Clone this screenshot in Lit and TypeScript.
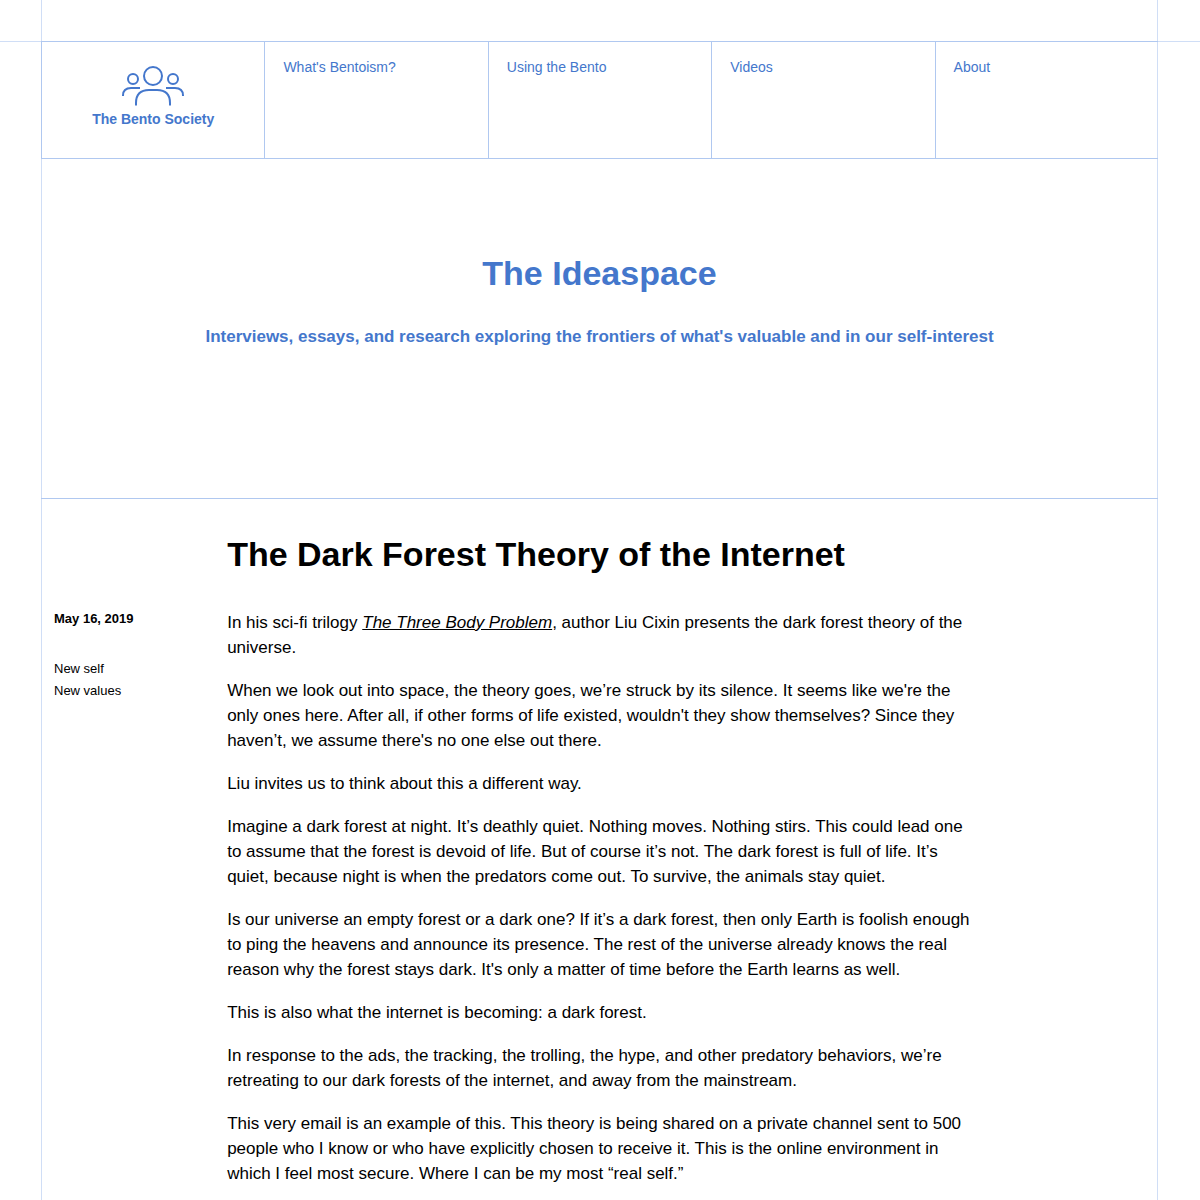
import { LitElement, html, css } from "lit";
import { customElement } from "lit/decorators.js";

const NAV = ["What's Bentoism?", "Using the Bento", "Videos", "About"];
const TOPICS = ["New self", "New values"];

const PARAGRAPHS = [
  "When we look out into space, the theory goes, we’re struck by its silence. It seems like we're the only ones here. After all, if other forms of life existed, wouldn't they show themselves? Since they haven’t, we assume there's no one else out there.",
  "Liu invites us to think about this a different way.",
  "Imagine a dark forest at night. It’s deathly quiet. Nothing moves. Nothing stirs. This could lead one to assume that the forest is devoid of life. But of course it’s not. The dark forest is full of life. It’s quiet, because night is when the predators come out. To survive, the animals stay quiet.",
  "Is our universe an empty forest or a dark one? If it’s a dark forest, then only Earth is foolish enough to ping the heavens and announce its presence. The rest of the universe already knows the real reason why the forest stays dark. It's only a matter of time before the Earth learns as well.",
  "This is also what the internet is becoming: a dark forest.",
  "In response to the ads, the tracking, the trolling, the hype, and other predatory behaviors, we’re retreating to our dark forests of the internet, and away from the mainstream.",
  "This very email is an example of this. This theory is being shared on a private channel sent to 500 people who I know or who have explicitly chosen to receive it. This is the online environment in which I feel most secure. Where I can be my most “real self.”",
];

@customElement("bento-header")
export class BentoHeader extends LitElement {
  static styles = css`
    :host {
      display: block;
    }
    .bar {
      display: grid;
      grid-template-columns: repeat(5, 1fr);
      min-height: 116px;
      margin-top: -1px;
      border: solid #b0c8f0;
      border-width: 1px 0;
    }
    .brand {
      display: flex;
      flex-direction: column;
      align-items: center;
      gap: 3px;
      padding-top: 24px;
      border-left: 1px solid #b0c8f0;
      font-size: 14px;
      line-height: 20px;
      font-weight: 700;
      color: #4477cc;
      text-decoration: none;
    }
    .mark {
      display: block;
      width: 62px;
      height: 40px;
      fill: none;
      stroke: #4477cc;
      stroke-width: 2;
    }
    .nav {
      display: contents;
    }
    .item {
      padding: 15px 18px;
      border-left: 1px solid #b0c8f0;
      font-size: 14px;
      line-height: 20px;
      color: #4477cc;
      text-decoration: none;
    }
  `;

  render() {
    return html`
      <header class="bar">
        <a class="brand" href="#home">
          <svg class="mark" viewBox="0 0 62 40" aria-hidden="true">
            <circle cx="31" cy="10" r="9" />
            <circle cx="11" cy="13" r="5" />
            <circle cx="51" cy="13" r="5" />
            <path d="M14 39.500V37Q14 24 27 24H35Q48 24 48 37V39.500" />
            <path d="M1 30V29.500Q1 22 9 22H18" />
            <path d="M44 22H53Q61 22 61 29.500V30" />
          </svg>
          <span>The Bento Society</span>
        </a>
        <nav class="nav">
          ${NAV.map((label) => html`<a class="item" href="#">${label}</a>`)}
        </nav>
      </header>
    `;
  }
}

@customElement("app-root")
export class AppRoot extends LitElement {
  static styles = css`
    :host {
      display: block;
      min-height: 100vh;
      background: #fff;
      color: #000;
      font-family: "Liberation Sans", Arial, sans-serif;
    }
    .top {
      padding: 0 42px 0 41px;
      border-bottom: 1px solid #d0def6;
    }
    .rails {
      height: 41px;
      box-shadow: inset 1px 0 #d0def6, inset -1px 0 #d0def6;
    }
    .frame {
      margin: 0 42px 0 41px;
      box-shadow: inset 1px 0 #d0def6, inset -1px 0 #d0def6;
    }
    .hero {
      padding: 92px 16px 149px;
      border-bottom: 1px solid #b0c8f0;
      color: #4477cc;
      text-align: center;
    }
    .hero-title,
    .title {
      margin: 0;
      font-size: 34px;
      line-height: 44px;
      font-weight: 700;
    }
    .tagline {
      margin: 29px 0 0;
      font-size: 17px;
      line-height: 25px;
      font-weight: 700;
    }
    .article {
      display: grid;
      grid-template-columns: 1fr 4fr 1fr;
      row-gap: 32px;
      padding-top: 33px;
    }
    .title {
      grid-column: 2;
    }
    .meta {
      grid-column: 1;
      padding-left: 13px;
      font-size: 13px;
      line-height: 22px;
    }
    .date {
      display: block;
      font-weight: 700;
    }
    .topics {
      list-style: none;
      margin: 28px 0 0;
      padding: 0;
    }
    .topic {
      color: inherit;
      text-decoration: none;
    }
    .body {
      grid-column: 2;
      padding-top: 2px;
      font-size: 17px;
      line-height: 25px;
    }
    .para {
      margin: 0 0 18px;
    }
    .book {
      color: inherit;
      font-style: italic;
    }
  `;

  render() {
    return html`
      <div class="top"><div class="rails"></div></div>
      <div class="frame">
        <bento-header></bento-header>
        <section class="hero">
          <h1 class="hero-title">The Ideaspace</h1>
          <p class="tagline">
            Interviews, essays, and research exploring the frontiers of what's valuable and in our self-interest
          </p>
        </section>
        <article class="article">
          <h2 class="title">The Dark Forest Theory of the Internet</h2>
          <aside class="meta">
            <time class="date" datetime="2019-05-16">May 16, 2019</time>
            <ul class="topics">
              ${TOPICS.map((t) => html`<li><a class="topic" href="#">${t}</a></li>`)}
            </ul>
          </aside>
          <div class="body">
            <p class="para">
              In his sci-fi trilogy <a class="book" href="#">The Three Body Problem</a>, author Liu Cixin presents
              the dark forest theory of the universe.
            </p>
            ${PARAGRAPHS.map((p) => html`<p class="para">${p}</p>`)}
          </div>
        </article>
      </div>
    `;
  }
}
